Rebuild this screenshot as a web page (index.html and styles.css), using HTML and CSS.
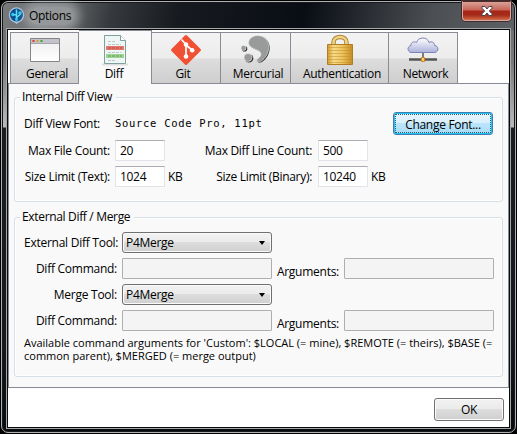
FILE: index.html
```html
<!DOCTYPE html>
<html lang="en">
<head>
<meta charset="utf-8">
<title>Options</title>
<link rel="stylesheet" href="styles.css">
</head>
<body>
<div class="window">
  <header class="titlebar">
    <svg class="app-icon" width="17" height="17" viewBox="0 0 17 17"><path d="M5 14h7l-3.500 3z" fill="#aac9e5"/><circle cx="8.500" cy="8" r="7.700" fill="#a7c4df"/><circle cx="8.500" cy="8" r="6.500" fill="#0b4f91"/><path d="M8.500 2.500v11M4.800 7.800h3.700M8.500 10.500l3.500-3V5.500" stroke="#5fe3f4" stroke-width="1.500" fill="none"/><circle cx="4.900" cy="7.500" r="1.700" fill="#35c9e9"/><circle cx="12" cy="6" r="1.800" fill="#35c9e9"/><circle cx="8.500" cy="12.300" r="1.500" fill="#35c9e9"/></svg>
    <h1 class="title">Options</h1>
    <button class="close" aria-label="Close"><svg width="12" height="10" viewBox="0 0 12 10"><path d="M1 .5h3L6 3 8 .5h3v1.700L8.300 5 11 7.800v1.700H8L6 7 4 9.500H1V7.800L3.700 5 1 2.200z" fill="#fff" stroke="#4c4450"/></svg></button>
  </header>
  <main class="client">
    <nav class="tabs">
      <div class="tab general">
        <svg width="32" height="32" viewBox="0 0 32 32"><defs><linearGradient id="wg" x2="0" y2="1"><stop stop-color="#eee"/><stop offset="1" stop-color="#fff"/></linearGradient></defs><path d="M1.500 4.500h29v23h-29z" fill="url(#wg)" stroke="#858588"/><path d="M2 5h28v4H2z" fill="#c3c3cc"/><path d="M2 9.500h28" stroke="#a5a5ac"/><path d="M3.500 6h2v2h-2z" fill="#dc3434"/><path d="M7.500 6h2v2h-2z" fill="#cca321"/><path d="M11.500 6h2v2h-2z" fill="#2daa31"/></svg>
        <span>General</span>
      </div>
      <div class="tab active diff">
        <svg width="32" height="32" viewBox="0 0 32 32"><path d="M3 30.500h26" stroke="#dedede" stroke-width="2"/><path d="M5.500 1.500h16l5 5v23h-21z" fill="#eef6f5" stroke="#81a09d"/><path d="M21.500 1.500v5h5" fill="#fff" stroke="#81a09d"/><path d="M7 12h18v4H7z" fill="#e7766b"/><path d="M7 20h18v4H7z" fill="#9bd590"/><path d="M9 7.500h7M9 10.500h13M9 18.500h13M9 26.500h7" stroke="#c0c8c7" stroke-dasharray="3 1"/><path d="M9 14h14" stroke="#a9534d" stroke-dasharray="3 1"/><path d="M9 22h14" stroke="#68975f" stroke-dasharray="3 1"/></svg>
        <span>Diff</span>
      </div>
      <div class="tab git">
        <svg width="32" height="32" viewBox="0 0 32 32"><rect x="5" y="5" width="22" height="22" rx="1.500" transform="rotate(45 16 16)" fill="#f05033"/><path d="M11.500 5.500l4.500 5v12M16 11l6 5" stroke="#fff" stroke-width="1.700" fill="none"/><circle cx="16" cy="10.500" r="2.300" fill="#fff"/><circle cx="22.200" cy="16.300" r="2.300" fill="#fff"/><circle cx="16" cy="22.500" r="2.300" fill="#fff"/></svg>
        <span>Git</span>
      </div>
      <div class="tab mercurial">
        <svg width="32" height="32" viewBox="0 0 32 32"><g fill="#303033" transform="translate(1 .7)"><path d="M8.500 8C10 1 19 0 24 3.500c5 3.500 6 11 3 17-2 4-6 7.500-9 7.500-2-.5-2-2 0-3.500 4-3 4-6-.5-8.500-5-2-9.500-3.500-9-8z"/><circle cx="8" cy="23.500" r="4.300"/><circle cx="3.500" cy="14" r="2.800"/></g><g fill="#999b9b" stroke="#ececec" stroke-width=".6"><path d="M8.500 8C10 1 19 0 24 3.500c5 3.500 6 11 3 17-2 4-6 7.500-9 7.500-2-.5-2-2 0-3.500 4-3 4-6-.5-8.500-5-2-9.500-3.500-9-8z"/><circle cx="8" cy="23.500" r="4"/><circle cx="3.500" cy="14" r="2.500"/></g></svg>
        <span>Mercurial</span>
      </div>
      <div class="tab auth">
        <svg width="32" height="32" viewBox="0 0 32 32"><defs><linearGradient id="lg"><stop stop-color="#d29d34"/><stop offset=".25" stop-color="#f7dc86"/><stop offset=".6" stop-color="#edc35b"/><stop offset="1" stop-color="#c58c24"/></linearGradient></defs><path d="M9.500 12V8.500C9.500 1.200 22.500 1.200 22.500 8.500V12" fill="none" stroke="#ad8539" stroke-width="4.500"/><path d="M9.500 12V8.500C9.500 1.200 22.500 1.200 22.500 8.500V12" fill="none" stroke="#f1d584" stroke-width="2.500"/><path d="M3.500 10.500h25v20h-25z" fill="url(#lg)" stroke="#b27c21"/><path d="M4 13.500h24M4 16.500h24M4 19.500h24M4 22.500h24M4 25.500h24M4 28.500h24" stroke="#bf8c2d" opacity=".5"/></svg>
        <span>Authentication</span>
      </div>
      <div class="tab network">
        <svg width="32" height="32" viewBox="0 0 32 32"><defs><linearGradient id="cg" x2="0" y2="1"><stop stop-color="#fff"/><stop offset="1" stop-color="#acb2da"/></linearGradient></defs><path d="M4 18.500c-4-1-4-6 0-7-.5-3 3-4.500 5.500-3 2-6 11-6 12.500 0 3-1.500 5.500 0 5.500 3 4.500.5 4.500 6 .5 7z" fill="url(#cg)" stroke="#7d81b7"/><path d="M16 19v6" stroke="#555" stroke-width="1.500"/><path d="M2 25.500h28" stroke="#555" stroke-width="2.500"/><path d="M14.500 23.500h3v4h-3z" fill="#ffd05c" stroke="#cf8223"/></svg>
        <span>Network</span>
      </div>
    </nav>
    <section class="pane">
      <div class="group internal">
        <h2 class="legend">Internal Diff View</h2>
        <div class="font-row"><span class="font-label">Diff View Font:</span><span class="font-name">Source Code Pro, 11pt</span><button class="btn focus">Change Font...</button></div>
        <div class="limit-row"><label class="l1">Max File Count:</label><span class="field">20</span><span class="unit"></span><label class="l2">Max Diff Line Count:</label><span class="field">500</span></div>
        <div class="limit-row"><label class="l1">Size Limit (Text):</label><span class="field">1024</span><span class="unit">KB</span><label class="l2">Size Limit (Binary):</label><span class="field">10240</span><span class="unit">KB</span></div>
      </div>
      <div class="group external">
        <h2 class="legend">External Diff / Merge</h2>
        <div class="tool-row"><label>External Diff Tool:</label><span class="select">P4Merge<i class="caret"></i></span></div>
        <div class="tool-row"><label>Diff Command:</label><span class="input"></span><label class="args">Arguments:</label><span class="input"></span></div>
        <div class="tool-row"><label>Merge Tool:</label><span class="select">P4Merge<i class="caret"></i></span></div>
        <div class="tool-row"><label>Diff Command:</label><span class="input"></span><label class="args">Arguments:</label><span class="input"></span></div>
        <p class="hint">Available command arguments for 'Custom': $LOCAL (= mine), $REMOTE (= theirs), $BASE (=<br>common parent), $MERGED (= merge output)</p>
      </div>
    </section>
    <footer class="footer"><button class="btn ok">OK</button></footer>
  </main>
</div>
</body>
</html>
```
FILE: styles.css
```css
* { box-sizing: border-box; }
body {
  margin: 0;
  padding: 1px 0 0 1px;
  height: 434px;
  overflow: hidden;
  background: #000;
  color: #000;
  font: 12px/16px "Open Sans", sans-serif;
  letter-spacing: -0.3px;
}
h1, h2, p { margin: 0; font: inherit; }
button { font: inherit; letter-spacing: inherit; padding: 0; color: #000; }
label, span { white-space: nowrap; }
.window {
  width: 515px;
  height: 432px;
  padding: 0 6px;
  border: 1px solid #aeb0b1;
  border-radius: 7px;
  background:
    linear-gradient(100deg, #77797b 0, #65686a 65px, #35383c 110px, #171b20 175px, #090d14 300px, #4b4e52 425px, #606366 515px) top / 100% 28px no-repeat,
    linear-gradient(#66686a, #77797a 60px, #bcb9ba 125px, #1b1e21 126px, #15191e 340px, #070b0d 430px);
  box-shadow: inset 0 0 0 1px #15191b;
}
.titlebar { display: flex; height: 26px; padding-top: 5px; }
.app-icon { flex: none; }
.title {
  margin: 0 0 0 4px;
  padding: 0 4px 0 0;
  height: 18px;
  line-height: 17px;
  border-radius: 9px;
  background: rgba(205, 207, 209, 0.45);
  box-shadow: 0 0 8px 5px rgba(205, 207, 209, 0.45);
}
.close {
  width: 49px;
  height: 20px;
  margin: -6px -2px 0 auto;
  border: 1px solid #d9aaa5;
  border-top-color: #4e2b28;
  border-radius: 0 0 4px 4px;
  background: linear-gradient(#d9a096, #c66557 8px, #a92617 9px, #a52a19 13px, #d36b47);
  line-height: 0;
  box-shadow: 0 0 0 1px #3f2b2b;
}
.client {
  width: 501px;
  height: 397px;
  background: #fff;
  outline: 1px solid #080a0b;
  box-shadow: 0 0 0 2px #a5a8a9;
  margin-top: 2px;
}
.tabs {
  display: flex;
  align-items: flex-end;
  height: 54px;
  padding-left: 2px;
  background: linear-gradient(#898c95, #898c95) bottom / 100% 1px no-repeat;
}
.tab {
  display: flex;
  flex-direction: column;
  align-items: center;
  height: 52px;
  border: 1px solid #898c95;
  border-left-width: 0;
  background: linear-gradient(#f3f3f3, #ececec 25px, #dddddd 26px, #cecece);
  font-size: 12px;
  letter-spacing: -0.3px;
  line-height: 18px;
}
.tab svg { flex: none; margin-top: 1px; }
.tab span { margin: -1px 0 0 5px; }
.general { width: 69px; border-left-width: 1px; }
.diff { width: 73px; }
.git { width: 69px; }
.mercurial { width: 70px; }
.auth { width: 98px; }
.network { width: 69px; }
.tab.git span { margin-left: -6px; }
.tab.active { height: 54px; background: #f9f9f9; border-bottom: 0; padding-top: 2px; }
.tab.active span { margin-left: -2px; }
.pane {
  height: 304px;
  padding: 13px 5px 0;
  border: 1px solid #898c95;
  border-top: 0;
  background: #f9f9f9;
}
.group { border: 1px solid #d5dfe5; border-radius: 3px; padding: 0 9px; box-shadow: inset 0 0 0 1px #fff; }
.internal { height: 105px; }
.external { height: 160px; margin-top: 15px; }
.legend {
  width: max-content;
  height: 16px;
  margin: -9px 0 0 -4px;
  padding: 0 4px 0 2px;
  background: #f9f9f9;
  letter-spacing: -0.33px;
}
.font-row { display: flex; height: 23px; margin-top: 7px; line-height: 23px; }
.font-label { width: 91px; }
.font-name { font: 10.5px/23px "DejaVu Sans Mono", monospace; letter-spacing: 0.7px; }
.btn {
  border: 1px solid #707070;
  border-radius: 3px;
  background: linear-gradient(#f2f2f2, #ebebeb 48%, #dddddd 50%, #cfcfcf);
  box-shadow: inset 0 0 0 1px #fbfbfb;
}
.focus {
  width: 100px;
  height: 23px;
  margin-left: auto;
  border-color: #3c7fb1;
  background: linear-gradient(#e9f5fc, #d7effc 48%, #bce5fb 50%, #a9daf5);
  box-shadow: inset 0 0 0 1px #21c4f5;
  outline: 1px dotted #36596b;
  outline-offset: -3px;
}
.limit-row { display: flex; height: 21px; margin-top: 5px; line-height: 21px; }
.l1 { width: 86px; text-align: right; margin-right: 5px; letter-spacing: -0.26px; }
.l2 { width: 117px; text-align: right; margin-right: 6px; }
.field { width: 50px; padding-left: 4px; line-height: 19px; border: 1px solid #e1e4e9; border-top-color: #abadb3; background: #fff; }
.unit { width: 30px; padding-left: 3px; }
.tool-row { display: flex; height: 21px; margin-bottom: 5px; line-height: 21px; }
.tool-row > * { flex: none; }
.external .legend { margin-bottom: 7px; }
.tool-row label { width: 93px; margin-right: 5px; text-align: right; letter-spacing: -0.26px; }
.tool-row .args { width: 67px; margin-right: 5px; line-height: 27px; }
.input { width: 150px; border: 1px solid #afafaf; background: #f4f4f4; border-radius: 1px; }
.select {
  display: flex;
  justify-content: space-between;
  align-items: center;
  width: 150px;
  padding: 0 6px 0 3px;
  border: 1px solid #707070;
  border-radius: 3px;
  background: linear-gradient(#f2f2f2, #ebebeb 48%, #dddddd 50%, #cfcfcf);
  box-shadow: inset 0 0 0 1px #fafafa;
}
.caret { border: 3.5px solid transparent; border-top: 4px solid #000; border-bottom: 0; }
.hint { line-height: 13px; font-size: 11px; white-space: nowrap; letter-spacing: 0; }
.footer { display: flex; justify-content: flex-end; padding: 10px 5px 0; }
.ok { width: 70px; height: 23px; }
```
